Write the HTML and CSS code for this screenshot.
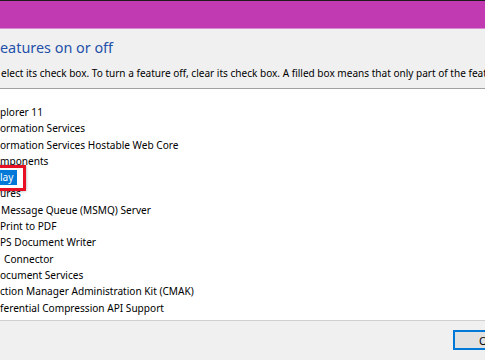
FILE: index.html
```html
<!DOCTYPE html>
<html lang="en">
<head>
  <meta charset="UTF-8">
  <title>Windows Features</title>
  <link rel="stylesheet" href="styles.css">
</head>
<body>
  <div class="window">
    <div class="titlebar"></div>
    <!-- Header: main instruction + description -->
    <div class="header">
      <div class="main-title">eatures on or off</div>
      <div class="instructions">elect its check box. To turn a feature off, clear its check box. A filled box means that only part of the feature is turned on.</div>
    </div>
    <!-- Feature tree -->
    <div class="feature-tree">
      <div class="tree-row">plorer 11</div>
      <div class="tree-row">ormation Services</div>
      <div class="tree-row">ormation Services Hostable Web Core</div>
      <div class="tree-row">mponents</div>
      <div class="tree-row">
        <span class="selected">lay</span>
        <span class="highlight-box"></span>
      </div>
      <div class="tree-row">ures</div>
      <div class="tree-row indent-1">Message Queue (MSMQ) Server</div>
      <div class="tree-row">Print to PDF</div>
      <div class="tree-row">PS Document Writer</div>
      <div class="tree-row indent-4">Connector</div>
      <div class="tree-row">ocument Services</div>
      <div class="tree-row">ction Manager Administration Kit (CMAK)</div>
      <div class="tree-row">ferential Compression API Support</div>
    </div>
    <!-- Bottom buttons -->
    <div class="button-bar">
      <button class="ok-btn">OK</button>
    </div>
  </div>
</body>
</html>
```

FILE: styles.css
```css
body {
  margin: 0;
  padding: 0;
  background: #f0f0f0;
  font-family: 'Noto Sans', 'Open Sans', sans-serif;
  color: #000;
  overflow: hidden;
}
.window {
  width: 485px;
  height: 360px;
  display: flex;
  flex-direction: column;
  overflow: hidden;
}
.titlebar {
  height: 27px;
  background: #c13ab2;
  border-top: 1px solid #1b1b1b;
  border-bottom: 1px solid #d78ad0;
  flex-shrink: 0;
}
/* Header */
.header {
  height: 59px;
  padding-top: 9px;
  box-sizing: border-box;
  flex-shrink: 0;
}
.main-title {
  font-size: 14.4px;
  line-height: 20px;
  color: #2550a9;
  white-space: nowrap;
}
.instructions {
  margin-top: 8px;
  font-size: 10.05px;
  line-height: 14px;
  white-space: nowrap;
  padding-left: 1px;
}
/* Tree */
.feature-tree {
  height: 233px;
  background: #fff;
  border-top: 1px solid #a0a0a0;
  border-bottom: 1px solid #cfcfcf;
  padding-top: 15px;
  box-sizing: border-box;
  flex-shrink: 0;
}
.tree-row {
  position: relative;
  height: 16.3px;
  line-height: 16px;
  font-size: 10.1px;
  white-space: nowrap;
}
.tree-row.indent-1 { padding-left: 1px; }
.tree-row.indent-4 { padding-left: 4px; }
.selected {
  display: inline-block;
  background: #0078d7;
  color: #fff;
  padding-right: 4px;
  line-height: 15px;
}
.highlight-box {
  position: absolute;
  left: -6px;
  top: -4px;
  width: 26px;
  height: 20px;
  border: 3px solid #e81123;
  box-shadow: 0 0 3px rgba(0,0,0,0.35);
}
/* Buttons */
.button-bar {
  flex: 1;
  display: flex;
  justify-content: flex-end;
  align-items: flex-start;
  padding-top: 9px;
}
.ok-btn {
  width: 75px;
  height: 20px;
  margin-right: -43px;
  background: #e1e1e1;
  border: 2px solid #0078d7;
  font-family: 'Noto Sans', 'Open Sans', sans-serif;
  font-size: 11px;
  padding: 0 0 0 24px;
  text-align: left;
  color: #000;
}
```
